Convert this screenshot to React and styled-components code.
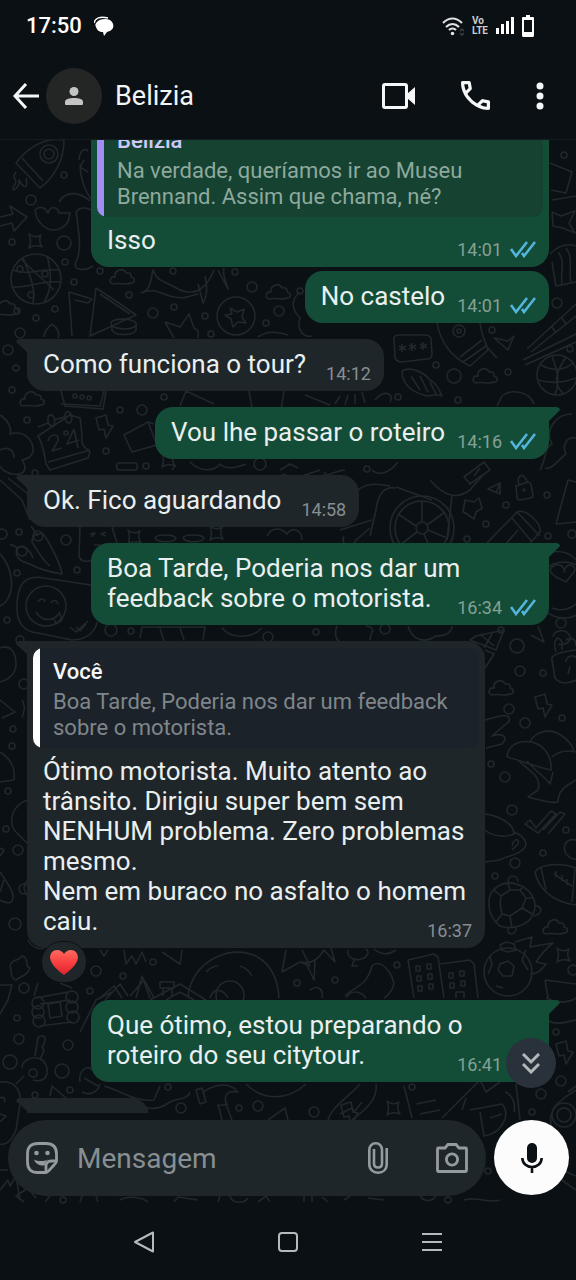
import React, { useLayoutEffect, useRef } from 'react';
import styled, { createGlobalStyle, css } from 'styled-components';

const messages = [
  {
    id: 1,
    mine: true,
    text: 'Isso',
    time: '14:01',
    quote: {
      name: 'Belizia',
      text: 'Na verdade, queríamos ir ao Museu Brennand. Assim que chama, né?',
    },
  },
  { id: 2, mine: true, text: 'No castelo', time: '14:01', grouped: true },
  { id: 3, text: 'Como funciona o tour?', time: '14:12', tail: true },
  { id: 4, mine: true, text: 'Vou lhe passar o roteiro', time: '14:16', tail: true },
  { id: 5, text: 'Ok. Fico aguardando', time: '14:58', tail: true },
  {
    id: 6,
    mine: true,
    text: 'Boa Tarde, Poderia nos dar um feedback sobre o motorista.',
    time: '16:34',
    tail: true,
  },
  {
    id: 7,
    text:
      'Ótimo motorista. Muito atento ao trânsito. Dirigiu super bem sem NENHUM problema. Zero problemas mesmo.\nNem em buraco no asfalto o homem caiu.',
    time: '16:37',
    tail: true,
    liked: true,
    quote: {
      name: 'Você',
      self: true,
      text: 'Boa Tarde, Poderia nos dar um feedback sobre o motorista.',
    },
  },
  {
    id: 8,
    mine: true,
    text: 'Que ótimo, estou preparando o roteiro do seu citytour.',
    time: '16:41',
    tail: true,
  },
  { id: 9, text: 'Já', time: '16:42', tail: true },
];

// small loose circles of the wallpaper: x, y, radius
const rings = [
  [31, 200, 5], [64, 175, 3], [64, 243, 7], [12, 242, 3], [65, 262, 3], [74, 282, 3],
  [100, 271, 3], [129, 295, 3], [153, 313, 5], [174, 307, 3], [205, 316, 3], [17, 311, 3],
  [36, 318, 3], [55, 309, 3], [20, 333, 5], [8, 350, 5], [16, 368, 3], [12, 390, 3],
  [173, 271, 3], [235, 272, 3], [252, 287, 5], [279, 311, 5], [266, 323, 3], [211, 334, 3],
  [564, 155, 3], [557, 303, 5], [492, 330, 3], [570, 349, 3], [436, 365, 3], [454, 376, 7],
  [508, 372, 3], [300, 291, 3], [27, 420, 3], [142, 410, 5], [120, 410, 3], [164, 397, 3],
  [106, 451, 3], [146, 466, 3], [35, 473, 3], [260, 464, 6], [66, 540, 5], [19, 532, 3],
  [17, 573, 3], [77, 570, 3], [7, 620, 3], [111, 630, 6], [131, 631, 3], [2, 534, 5],
  [367, 469, 3], [547, 495, 3], [506, 505, 3], [486, 524, 3], [548, 536, 3], [572, 534, 4],
  [467, 539, 3], [398, 397, 3], [458, 400, 3], [385, 629, 5], [316, 632, 3], [501, 630, 3],
  [561, 623, 5], [20, 640, 4], [268, 637, 5], [24, 684, 5], [13, 729, 3],
  [12, 746, 3], [8, 791, 3], [6, 829, 3], [18, 850, 5], [15, 924, 6], [24, 889, 5],
  [96, 971, 5], [123, 976, 3], [153, 962, 3], [517, 646, 7], [520, 671, 5], [543, 673, 3],
  [509, 709, 5], [525, 723, 5], [562, 718, 3], [491, 764, 3], [505, 777, 5], [512, 810, 5],
  [566, 830, 3], [543, 853, 3], [515, 863, 5], [495, 876, 3], [397, 965, 3], [335, 980, 3],
  [573, 970, 5], [90, 991, 3], [24, 988, 5], [17, 1018, 3], [19, 1039, 5], [68, 1045, 5],
  [10, 1062, 7], [62, 1071, 7], [35, 1095, 3], [70, 1090, 3], [181, 1108, 5], [168, 1087, 3],
  [239, 1108, 3], [258, 1106, 5], [314, 1112, 5], [541, 1094, 5], [561, 1081, 5], [532, 1112, 3],
  [556, 1032, 3], [412, 1087, 3], [488, 1171, 3], [63, 1200, 3], [448, 1200, 3], [297, 983, 3],
];

const clouds = [
  [122, 277], [278, 292], [32, 399], [485, 376], [501, 688], [555, 927], [6, 308], [150, 555],
];

const sparkles = [
  [35, 241], [134, 537], [393, 1108], [563, 955], [216, 533], [168, 460],
];

const bolts = [
  [105, 426], [544, 705], [565, 1052], [350, 1113],
];

const doodles = [
  // rocket and smoke
  'M16 163C28 147 45 137 64 140C64 158 56 176 40 188ZM22 158L43 181M16 172C10 180 20 178 14 186C10 194 20 188 19 180C26 192 28 186 26 178',
  // arrow
  'M0 217L13 214L10 206L27 217L14 231L12 223L0 226',
  // mitten with sleeve
  'M35 210C40 205 46 208 48 213C50 205 58 207 59 213L70 213L68 222C62 230 54 231 48 229C40 225 36 219 35 210M59 202C66 190 80 192 90 201M76 212C80 206 88 208 91 210M76 212C79 232 82 250 76 262C72 270 84 272 93 266',
  'M79 160C80 150 84 148 88 151M80 165C80 176 84 190 92 200M84 160L80 167L88 172',
  // globe
  'M13 270C28 276 42 268 58 270M12 287C28 288 42 280 60 282M23 258C30 275 36 290 33 303M47 256C52 272 52 290 44 302M22 260L54 290',
  // pizza slices
  'M72 336L69 292L92 299L88 303L75 300M96 288L90 336L136 315C124 306 108 296 96 288ZM100 294L130 314',
  'M111 322C116 318 132 318 136 323V330C134 336 114 336 112 330ZM111 326C120 330 130 330 136 326',
  // whale
  'M141 293C151 290 150 282 153 270C157 282 165 281 180 290C194 296 206 290 214 270M198 284L203 303C208 296 207 285 205 276M218 270L228 289C226 280 222 276 224 268M141 293C152 288 158 292 170 296C184 300 190 296 198 294',
  'M165 322L180 327L189 314L194 328C200 330 198 334 198 338M165 322L174 338M230 308L237 312L244 309L242 317L246 323L238 322L233 327L231 319L225 315L232 314Z',
  // leafy plant above the first grey bubble
  'M44 337C44 330 50 326 52 324C58 328 60 334 58 338M258 337C268 330 278 332 288 335M300 292C290 300 292 310 300 318C296 330 304 338 312 336',
  // picture frames on the right edge
  'M550 163L572 172L566 193L551 190M552 200L576 196M552 212L561 216L575 211L569 223L575 233L563 228L553 226Z',
  // shirt
  'M550 254C560 244 570 244 576 246M552 262L556 286L576 282M558 252C566 262 560 272 562 284M566 248C574 258 568 270 571 283',
  // telescope
  'M437 322C440 342 452 358 470 366L488 350C484 338 480 330 480 322M463 362L486 346L497 358M460 357L482 340M508 341L494 338L508 350L514 336Z',
  // speech box
  'M394 340Q393 336 398 335L425 335Q430 335 431 339L432 354Q432 359 427 359L402 362Q396 362 395 357Z',
  // chopsticks
  'M527 349L576 304M531 352L576 316M523 360L576 334M525 365L576 342M552 327L556 333M562 318L566 324',
  // basket ball
  'M541 365C554 372 566 370 574 362M538 380C552 384 566 382 576 378M552 356C558 372 560 382 555 395M566 357C556 372 552 384 564 394',
  // shell
  'M402 371C410 366 424 372 430 380C438 384 440 392 442 396C436 392 430 398 424 395C412 392 402 384 402 371M411 376L420 390M420 376L428 392M430 382L436 394',
  // cash
  'M61 391L65 406L103 409L106 391M61 404L100 406L104 391M180 406L186 391L214 404M249 391L252 408M284 391L281 410M305 395L330 405M335 404L340 396M345 405L348 395M355 404L355 394M365 403L362 392M497 406L502 396C512 388 530 392 534 404M375 400C385 388 395 395 390 402',
  // calendar
  'M38 427L48 423M54 420L64 417M70 415L80 418L82 434C80 446 86 448 90 452L88 458L50 470L46 464C44 454 44 446 38 436Z M48 462L90 450M49 415C54 414 56 420 54 425C50 428 46 422 49 415M66 412C72 410 73 420 70 423C65 424 64 416 66 412',
  // sticky note
  'M124 435L148 422L157 445L132 452ZM148 422L154 424',
  // flower bush
  'M0 415C8 420 12 428 10 434C24 430 34 440 33 452C30 460 24 459 22 460C28 468 24 476 14 474C8 474 2 470 0 466M0 450C8 446 14 450 14 458M0 480L22 500L30 520M8 478L28 494',
  'M190 462C200 472 214 472 220 464C226 470 236 468 246 464M280 470L290 464L298 468M282 474L296 478M540 470C546 460 544 448 552 444C544 430 556 414 572 414M576 438C566 436 562 446 566 454C558 460 552 470 545 468',
  // chilies
  'M17 548C14 556 20 562 30 564C40 570 50 572 62 574C60 562 52 548 46 538C42 530 32 534 32 542C36 548 42 560 50 566M17 548C24 544 30 550 33 558M31 526L38 536M10 544L18 548M0 554C10 564 14 582 10 594C8 600 4 604 0 606',
  // sleeping face
  'M80 527L79 556C80 562 88 562 92 560M112 527L117 543M90 534L95 533L91 537M106 532L101 534L106 536M94 545H100M155 538C156 534 174 534 176 538C174 543 158 543 155 538M183 538C184 534 202 534 204 538C202 543 186 543 183 538M267 536C272 526 282 528 287 534C292 526 302 530 302 540',
  // smiling sticker
  'M20 588C24 578 34 576 44 578L91 585M17 606C16 622 24 632 38 633L72 640C88 640 96 630 97 622M20 588Q17 596 17 606M38 602C40 598 44 598 45 602M51 603C53 599 57 600 58 604M36 612C42 622 54 622 60 612M54 619L56 624L62 620L60 614M70 627L76 632L88 621M76 627L80 631L86 624',
  // scooter
  'M372 470C380 478 392 470 398 462M370 536L376 510C378 492 386 486 396 488M396 487L432 500M358 490C368 482 380 484 390 486M340 530L372 520M355 541L370 528M430 480C444 496 456 500 470 490L482 476M344 536C340 545 350 548 356 541M452 495L447 540M290 480L320 470M326 472C320 480 330 472 345 470',
  // watch
  'M464 477L484 462L490 470L470 484ZM474 476L480 468M488 489L500 483V494ZM500 483L496 493',
  // padlock
  'M516 486L528 482Q530 482 531 485L533 495Q533 498 530 498L520 500Q517 500 517 497ZM519 485C516 474 524 472 527 482',
  'M465 500L474 502L479 498L482 508L476 512L474 519L467 514L463 512Z',
  'M487 543L517 512C526 508 542 524 540 532L530 543M517 512L540 536M512 518L532 542M505 545L518 530M556 524L568 480L576 482M556 524L576 522',
  'M550 570C555 560 566 566 564 572C566 560 578 566 574 572L566 582C558 578 552 576 550 570M551 552C562 550 572 554 576 560M552 608C562 612 572 608 576 604',
  'M140 638L142 627H205L203 640M160 628L164 642M180 628L184 640M222 628C230 638 250 640 262 628M337 626C334 634 336 640 340 642M370 640C370 632 378 628 366 626M408 626C412 640 424 644 436 636C446 636 452 632 452 626M476 636L504 630L496 650L470 640ZM480 634L494 646M492 634L484 648M531 635L544 642L538 626M553 637C553 630 566 628 570 636C572 642 564 646 558 644',
  // big padlock
  'M552 660C550 655 560 652 576 650M552 660L555 678C560 684 568 684 576 680M556 652C552 640 558 634 562 642V650M566 640C572 636 576 640 576 646M566 662C566 656 574 654 576 658M568 674L570 666',
  // mushrooms
  'M507 757C508 744 520 740 532 742C546 746 552 758 551 770C538 768 520 760 507 757M530 742C536 730 552 728 562 736C572 742 574 752 574 751M552 757C560 750 568 750 576 752M518 760C530 772 542 776 538 790C532 794 530 796 528 797C540 800 552 804 558 802C558 790 566 786 576 780M527 761C534 770 544 776 550 784L553 772',
  // hand
  'M485 720L500 716C510 714 512 720 506 724L492 736C504 732 508 738 502 744L486 748M485 668L494 654L485 650',
  'M525 824L530 820L536 828L551 811L556 814L538 833ZM543 830L560 812L565 814L548 834M576 840C566 838 562 846 566 854C572 860 576 860 576 858',
  // cup
  'M485 814C500 816 514 824 514 834C504 838 492 836 485 830M514 832C528 838 528 846 522 850C516 856 506 856 500 860L485 862M512 846C514 838 520 838 518 844L512 850',
  // american football
  'M535 872C540 864 560 862 576 868M535 872C538 888 552 902 576 905M541 868L546 890M554 874L572 886M556 871V877M562 875V881M567 879V885M575 868L572 902',
  // turtle
  'M489 900C490 888 504 880 516 884C530 888 538 900 534 912C530 926 512 930 500 926C492 920 488 912 489 900M501 896L510 890L520 890L526 898L522 908L510 916L502 914L500 904ZM501 896L494 890M510 890L508 883M520 890L524 886M526 898L534 898M522 908L532 914M510 916L512 928M502 914L496 922M508 882C508 874 518 874 518 882M534 906C542 904 544 914 534 916M508 928C506 936 516 936 516 928',
  // flaming football
  'M500 945L506 942L514 944L516 950L508 952L502 950ZM500 964L508 961L514 966L512 976L503 976L498 970ZM490 956L492 965L488 974M526 950L522 960L528 970M496 986L503 988M515 942L532 937L530 947L553 943C544 950 540 956 536 962L546 964C540 972 536 974 530 974',
  // buildings
  'M408 960L434 954L438 957L444 998M408 960L414 998M440 964L470 960L474 964L478 998M416 966H420V971H416ZM427 964H431V969H427ZM417 976H421V981H417ZM428 974H432V979H428ZM418 986H422V991H418ZM429 984H433V989H429ZM449 973H453V978H449ZM460 971H464V976H460ZM450 983H454V988H450ZM461 981H465V986H461ZM456 998V992H464V998',
  'M545 980L576 984M545 980L548 998M547 1020C556 1026 566 1022 576 1020M546 998C560 1004 570 1002 576 998',
  // sun
  'M302 962C310 964 318 960 324 950L335 962L331 948M306 963L314 980L315 960M345 996C354 986 366 988 372 966C380 958 392 972 394 984C392 990 388 996 384 998M348 950C346 958 356 962 364 958C370 954 368 950 366 949M354 960L352 966L358 966M374 949C382 956 390 954 396 950',
  // left column
  'M0 648C10 644 16 652 16 664C16 674 8 680 0 682M0 700L15 712L2 718M22 700C26 706 24 712 22 718M0 752C10 758 16 768 14 780L0 782M28 800C14 804 8 818 14 830L28 844M0 856L4 850L0 848M0 872C8 884 14 892 13 898C12 904 8 904 0 900M4 880L0 892M28 880C22 886 24 892 28 896M10 966C12 958 18 962 22 956C30 958 24 966 30 968C28 976 20 976 16 980C10 978 12 972 10 966M28 940C32 948 40 950 44 948M100 950L104 956L108 950M124 950L126 964L132 956L136 964L142 952L146 962M162 952L180 964L182 950M0 985H12L8 1000L0 1014',
  // rainbow
  'M188 998C190 960 236 940 262 960C272 968 278 980 279 998M206 972C210 968 214 966 218 966M240 966C246 968 250 972 252 976M286 950L282 972L300 962L310 966L302 950',
  'M160 982H174V988H160ZM163 988V996M172 988V996M60 983L72 988M136 998L142 976L150 998M100 998L114 986L122 998',
  // log cabin
  'M36 998L68 992M40 1004L70 1000M40 1026L72 1022M48 1004L50 1018L62 1016L60 1002ZM34 996L38 983M80 1032L96 1000L112 992M105 1000L120 984L128 996M130 996L144 980L154 998M150 1000L180 984L206 1000M166 1000L180 992L194 1000M210 998C214 986 224 990 228 998',
  // key
  'M35 1056L38 1038C40 1034 46 1036 45 1040L44 1044L42 1047L44 1050L40 1060M22 1068C22 1056 46 1052 47 1070C48 1080 40 1082 33 1080M24 1076L16 1084',
  // mask
  'M0 1082C14 1080 22 1090 20 1104L16 1130C12 1140 6 1146 0 1144M0 1098C4 1096 6 1100 4 1102M0 1122L6 1116L0 1114',
  // tools
  'M80 1082C78 1070 88 1064 92 1070M84 1078L98 1086M82 1092C90 1096 98 1092 100 1084M50 1096L52 1086L66 1098M104 1086C120 1090 134 1102 154 1100L160 1086M132 1098C142 1110 156 1112 170 1102C178 1098 188 1100 190 1092',
  'M196 1090L202 1088L206 1102L200 1104ZM203 1092C212 1086 228 1080 238 1092C226 1090 224 1096 226 1104L232 1120M218 1104L222 1120M217 1106L228 1104M268 1120L285 1108L288 1120M246 1084C262 1100 286 1102 306 1084',
  'M328 1120C332 1106 350 1096 360 1084M352 1120C368 1108 378 1098 376 1084M340 1114L352 1108L354 1112L362 1102M404 1086L412 1118M416 1104L436 1100M420 1114L440 1110M442 1118L480 1080L486 1092L500 1082M466 1098L462 1110M470 1110L502 1104C512 1116 500 1134 484 1136L480 1112M490 1118L502 1114M505 1092C512 1094 516 1104 514 1112M516 1084L520 1120M552 1130C546 1108 560 1100 576 1090M576 1086L568 1092',
  // under the text box
  'M0 1170H8M0 1190L8 1180L10 1186L16 1176L20 1200M24 1202L16 1196L28 1188L36 1198M45 1202L50 1196M80 1202L82 1196M98 1202L96 1196M120 1200C126 1196 140 1196 148 1202M174 1202L178 1197L198 1200M218 1202L220 1196M230 1196C232 1204 244 1204 248 1198M258 1202L266 1196L270 1202M304 1202V1196M312 1202V1196M322 1197L328 1202M344 1200L350 1196M368 1198L384 1200M420 1196C424 1202 432 1202 436 1196M464 1200C476 1196 490 1204 500 1200M556 1176L576 1190M562 1170L576 1176',
  'M290 1020L300 1028M310 990C318 984 324 990 322 998M346 998C350 990 360 990 366 998M480 160L470 150M176 465L172 470M60 1150L64 1160',
];

const circles = [
  [49, 154, 9], [49, 154, 5], [36, 279, 25], [236, 316, 19], [459, 331, 6], [459, 331, 2],
  [557, 375, 20], [46, 606, 20], [422, 528, 32], [422, 528, 27], [422, 528, 6],
  [66, 433, 2], [508, 972, 24], [230, 995, 14], [33, 1073, 4], [38, 1003, 6], [38, 1012, 6],
  [39, 1021, 6], [72, 997, 6], [72, 1007, 6], [73, 1017, 6], [564, 1115, 12], [564, 1115, 7],
  [75, 396, 2], [82, 397, 2], [89, 398, 2], [20, 269, 3], [45, 274, 3], [31, 295, 3],
  [22, 551, 5], [38, 536, 5], [564, 590, 28], [524, 490, 1],
];

const spokes = 'M422 522V501M427 525L445 512M428 530L447 538M417 532L400 545M416 526L398 514M424 534L432 553';

function Wallpaper() {
  return (
    <WallpaperSvg viewBox="0 140 576 1064" preserveAspectRatio="xMidYMin slice" aria-hidden="true">
      {rings.map(([x, y, r], i) => <circle key={i} cx={x} cy={y} r={r} />)}
      {circles.map(([x, y, r], i) => <circle key={i} cx={x} cy={y} r={r} />)}
      {doodles.map((d, i) => <path key={i} d={d} />)}
      <path d={spokes} />
      {clouds.map(([x, y], i) => (
        <path
          key={i}
          transform={`translate(${x} ${y})`}
          d="M-9 7C-14 6 -12 -1 -7 0C-8 -7 1 -10 4 -4C8 -5 10 -2 9 0C14 1 13 7 8 6C4 9 -2 5 -9 7Z"
        />
      ))}
      {sparkles.map(([x, y], i) => (
        <path
          key={i}
          transform={`translate(${x} ${y})`}
          d="M-6 -7Q0 -2 6 -6Q3 0 7 6Q0 3 -6 7Q-3 0 -6 -7Z"
        />
      ))}
      {bolts.map(([x, y], i) => (
        <path
          key={i}
          transform={`translate(${x} ${y})`}
          d="M-9 -8L1 -11L3 -1L8 0L1 12L-1 3L-6 4Z"
        />
      ))}
      <path d="M402 344V352M399 346L406 350M406 346L399 350M412 343V351M409 345L416 349M416 345L409 349M423 342V350M420 344L427 348M427 344L420 348" />
      <path d="M118 463H136Q139 466 136 470H118Q115 466 118 463Z" />
      <path d="M48 441C50 433 60 433 58 441L52 451L62 448M74 429L67 444L79 440M74 429L78 448" />
    </WallpaperSvg>
  );
}

function Ticks() {
  return (
    <svg width="26" height="18" viewBox="0 0 26 18" fill="none" stroke="#53b4dc" strokeWidth="2.6">
      <path d="M1 9L6 16L17 2" />
      <path d="M12 13L14 16L25 2" />
    </svg>
  );
}

function Message({ msg }) {
  return (
    <Bubble $mine={msg.mine} $tail={msg.tail} $grouped={msg.grouped} $liked={msg.liked}>
      {msg.quote && (
        <Quote $mine={msg.mine} $self={msg.quote.self}>
          <QuoteName $self={msg.quote.self}>{msg.quote.name}</QuoteName>
          <QuoteText $mine={msg.mine}>{msg.quote.text}</QuoteText>
        </Quote>
      )}
      <Body $quoted={!!msg.quote}>
        {msg.text}
        <Meta $mine={msg.mine}>
          {msg.time}
          {msg.mine && <Ticks />}
        </Meta>
      </Body>
      {msg.liked && (
        <Reaction aria-label="Reações">
          <svg width="28" height="25" viewBox="0 0 28 25">
            <defs>
              <linearGradient id="heart" x1="0" y1="0" x2="0" y2="1">
                <stop offset="0" stopColor="#ff6a60" />
                <stop offset="0.5" stopColor="#f9403f" />
                <stop offset="1" stopColor="#dc2430" />
              </linearGradient>
            </defs>
            <path
              fill="url(#heart)"
              d="M14 25C9 21 1 15 0 8C0 3 3 0 7 0C10 0 13 2 14 4C15 2 18 0 21 0C25 0 28 3 28 8C27 15 19 21 14 25Z"
            />
          </svg>
        </Reaction>
      )}
    </Bubble>
  );
}

function App() {
  const list = useRef(null);

  // the conversation opens a little way down
  useLayoutEffect(() => {
    list.current.scrollTop = 46;
  }, []);

  return (
    <Screen>
      <GlobalStyle />
      <StatusBar>
        <Clock>17:50</Clock>
        <svg width="20" height="20" viewBox="0 0 20 20">
          <path fill="#fff" d="M3 6C5 3 12 2 16 4C19 6 20 9 19 12C18 14 16 15 13 16L10 20L9 16C5 16 3 14 2 11C1 9 1 8 3 6Z" />
          <path fill="none" stroke="#fff" strokeWidth="1.4" d="M0 7C1 2 6 0 14 2" />
        </svg>
        <StatusIcons>
          <svg width="22" height="20" viewBox="0 0 22 20" fill="none" stroke="#dfe1e2" strokeWidth="2.2">
            <path d="M1 7C7 1 14 1 20 7" />
            <path d="M4 11C8 7 13 7 17 11" />
            <path d="M7 14C9 12 12 12 14 14" />
            <circle cx="10.500" cy="17.500" r="1.800" fill="#dfe1e2" stroke="none" />
            <path stroke="#3c4144" strokeWidth="1.500" d="M18 15L20 13L22 15M18 17L20 19L22 17" />
          </svg>
          <Volte>
            <span>Vo</span>
            <span>LTE</span>
          </Volte>
          <svg width="18" height="18" viewBox="0 0 18 18" fill="#fff">
            <rect x="0" y="11" width="3" height="6" />
            <rect x="5" y="7" width="3" height="10" />
            <rect x="10" y="4" width="3" height="13" />
            <rect x="15" y="0" width="3" height="17" />
          </svg>
          <svg width="12" height="22" viewBox="0 0 12 22">
            <path fill="#fff" fillRule="evenodd" d="M4 0H8V2H11Q12 2 12 3V20Q12 22 11 22H1Q0 22 0 20V3Q0 2 1 2H4ZM2 5V17H10V5Z" />
          </svg>
        </StatusIcons>
      </StatusBar>

      <Header>
        <IconButton aria-label="Voltar">
          <svg width="26" height="26" viewBox="0 0 26 26" fill="none" stroke="#f4f6f7" strokeWidth="3">
            <path d="M26 13H2M13 1L2 13L13 25" />
          </svg>
        </IconButton>
        <Avatar>
          <svg width="18" height="18" viewBox="0 0 18 18" fill="#c4c4c4">
            <circle cx="9" cy="4.500" r="4.500" />
            <path d="M1 18Q0 18 0 17V15C0 12 4 11 9 11S18 12 18 15V17Q18 18 17 18Z" />
          </svg>
        </Avatar>
        <Contact>Belizia</Contact>
        <Actions>
          <IconButton aria-label="Chamada de vídeo">
            <svg width="33" height="26" viewBox="0 0 33 26">
              <rect x="1.500" y="1.500" width="23" height="23" rx="1.500" fill="none" stroke="#f4f6f7" strokeWidth="3" />
              <path fill="#f4f6f7" d="M25 11L33 4V22L25 15Z" />
            </svg>
          </IconButton>
          <IconButton aria-label="Chamada de voz">
            <svg width="29" height="29" viewBox="3 3 18 18" fill="#f4f6f7">
              <path d="M19.950 21C17.870 21 15.810 20.550 13.780 19.640C11.740 18.730 9.890 17.450 8.230 15.780C6.560 14.110 5.270 12.260 4.360 10.230C3.450 8.190 3 6.130 3 4.050C3 3.750 3.100 3.500 3.300 3.300C3.500 3.100 3.750 3 4.050 3H8.100C8.330 3 8.540 3.080 8.730 3.240C8.910 3.400 9.020 3.580 9.050 3.800L9.700 7.300C9.730 7.570 9.720 7.790 9.680 7.980C9.630 8.160 9.530 8.320 9.400 8.450L6.980 10.900C7.310 11.520 7.700 12.110 8.160 12.690C8.610 13.260 9.120 13.820 9.650 14.350C10.170 14.870 10.710 15.350 11.270 15.790C11.840 16.230 12.440 16.630 13.100 17L15.450 14.650C15.600 14.500 15.800 14.390 16.040 14.310C16.280 14.240 16.520 14.220 16.750 14.250L20.200 14.950C20.430 15.020 20.630 15.140 20.780 15.310C20.930 15.490 21 15.680 21 15.900V19.950C21 20.250 20.900 20.500 20.700 20.700C20.500 20.900 20.250 21 19.950 21ZM6.030 9L7.680 7.350L7.250 5H5.030C5.110 5.680 5.230 6.360 5.380 7.030C5.530 7.690 5.740 8.350 6.030 9ZM14.980 17.950C15.630 18.230 16.290 18.460 16.960 18.630C17.640 18.790 18.320 18.900 19 18.950V16.750L16.650 16.280Z" />
            </svg>
          </IconButton>
          <IconButton aria-label="Mais opções">
            <svg width="8" height="28" viewBox="0 0 8 28" fill="#f4f6f7">
              <circle cx="4" cy="4" r="3.500" />
              <circle cx="4" cy="14" r="3.500" />
              <circle cx="4" cy="24" r="3.500" />
            </svg>
          </IconButton>
        </Actions>
      </Header>

      <Chat>
        <Wallpaper />
        <List ref={list}>
          {messages.map((msg) => <Message key={msg.id} msg={msg} />)}
        </List>
        <ScrollDown aria-label="Ir para o fim">
          <svg width="18" height="21" viewBox="0 0 18 21" fill="none" stroke="#b3b8bb" strokeWidth="3">
            <path d="M1 1L9 9L17 1M1 11L9 19L17 11" />
          </svg>
        </ScrollDown>
        <Composer onSubmit={(e) => e.preventDefault()}>
          <Field>
            <IconButton type="button" aria-label="Figurinhas">
              <svg width="32" height="32" viewBox="0 0 32 32" fill="none" stroke="#949b9e" strokeWidth="2.800">
                <path d="M20 30.500H12C5 30.500 1.500 27 1.500 20V12C1.500 5 5 1.500 12 1.500H20C27 1.500 30.500 5 30.500 12V19C30.500 21 29 22 28 23L23 28.500C22 29.500 21 30.500 20 30.500Z" />
                <path d="M20 30V24C20 21 22 19 25 19H30" />
                <circle cx="10.500" cy="11" r="2.300" fill="#949b9e" stroke="none" />
                <circle cx="21.500" cy="11" r="2.300" fill="#949b9e" stroke="none" />
                <path fill="#949b9e" stroke="none" d="M8 17.500C12 19.500 18 19.500 22 17.500C20 19.500 19 21 18.500 23.500C14 24 9.500 22 8 17.500Z" />
              </svg>
            </IconButton>
            <Input type="text" placeholder="Mensagem" aria-label="Mensagem" />
            <IconButton type="button" aria-label="Anexar">
              <svg width="20" height="32" viewBox="0 0 20 32" fill="none" stroke="#949b9e" strokeWidth="2.600">
                <path d="M18.700 6V22C18.700 27.500 15 30.700 10 30.700S1.300 27.500 1.300 22V8C1.300 4 4 1.300 7.700 1.300S14 4 14 8V21.500C14 24 12.300 25.500 10 25.500S6 24 6 21.500V7" />
              </svg>
            </IconButton>
            <IconButton type="button" aria-label="Câmera">
              <svg width="32" height="30" viewBox="0 0 32 30" fill="none" stroke="#949b9e" strokeWidth="2.800">
                <path d="M2.500 5H9L12 1.500H20L23 5H29.500Q30.500 5 30.500 6V27.500Q30.500 28.500 29.500 28.500H2.500Q1.500 28.500 1.500 27.500V6Q1.500 5 2.500 5Z" />
                <circle cx="16" cy="16.500" r="5.600" />
              </svg>
            </IconButton>
          </Field>
          <MicButton type="button" aria-label="Gravar áudio">
            <svg width="22" height="30" viewBox="0 0 22 30">
              <rect x="6" y="0" width="10" height="20" rx="5" fill="#0b1014" />
              <path fill="none" stroke="#0b1014" strokeWidth="2.600" d="M1.300 15C1.500 20.500 5.500 24 11 24S20.500 20.500 20.700 15M11 24V30" />
            </svg>
          </MicButton>
        </Composer>
      </Chat>

      <NavBar>
        <IconButton aria-label="Android voltar">
          <svg width="20" height="22" viewBox="0 0 20 22" fill="none" stroke="#b5babd" strokeWidth="2" strokeLinejoin="round">
            <path d="M19 1.500V20.500L1 11Z" />
          </svg>
        </IconButton>
        <IconButton aria-label="Início">
          <svg width="20" height="20" viewBox="0 0 20 20" fill="none" stroke="#b5babd" strokeWidth="2">
            <rect x="1" y="1" width="18" height="18" rx="3" />
          </svg>
        </IconButton>
        <IconButton aria-label="Recentes">
          <svg width="20" height="20" viewBox="0 0 20 20" stroke="#b5babd" strokeWidth="2">
            <path d="M0 2H20M0 10H20M0 18H20" />
          </svg>
        </IconButton>
      </NavBar>
    </Screen>
  );
}

export default App;

const GlobalStyle = createGlobalStyle`
  * {
    box-sizing: border-box;
  }
  body {
    margin: 0;
    background: #0b1014;
    font-family: Roboto, "Noto Sans", sans-serif;
  }
  button,
  input {
    font-family: inherit;
  }
  svg {
    display: block;
    flex: none;
  }
`;

const Screen = styled.div`
  display: flex;
  flex-direction: column;
  height: 100vh;
  background: #0b1014;
  color: #e9eff0;
`;

const StatusBar = styled.div`
  display: flex;
  align-items: center;
  gap: 12px;
  height: 52px;
  padding: 0 42px 0 26px;
`;

const Clock = styled.span`
  font-size: 22px;
  line-height: 28px;
  font-weight: 500;
  color: #fff;
`;

const StatusIcons = styled.div`
  display: flex;
  align-items: center;
  gap: 8px;
  margin-left: auto;
`;

const Volte = styled.div`
  display: flex;
  flex-direction: column;
  font-size: 10px;
  line-height: 10px;
  font-weight: 700;
  color: #c9cccd;
`;

const Header = styled.header`
  display: flex;
  align-items: center;
  height: 88px;
  padding: 0 32px 0 13px;
  border-bottom: 1px solid #161d20;
`;

const IconButton = styled.button`
  display: flex;
  align-items: center;
  justify-content: center;
  padding: 0;
  border: none;
  background: none;
  cursor: pointer;
`;

const Avatar = styled.div`
  display: flex;
  align-items: center;
  justify-content: center;
  width: 56px;
  height: 56px;
  margin: 0 13px 0 7px;
  border-radius: 50%;
  background: #242626;
`;

const Contact = styled.h1`
  margin: 0;
  font-size: 27px;
  line-height: 32px;
  font-weight: 400;
  color: #f2f5f6;
`;

const Actions = styled.div`
  display: flex;
  align-items: center;
  gap: 46px;
  margin-left: auto;
`;

const Chat = styled.main`
  position: relative;
  display: flex;
  flex: 1;
  flex-direction: column;
  min-height: 0;
`;

const WallpaperSvg = styled.svg`
  position: absolute;
  inset: 0;
  width: 100%;
  height: 100%;
  fill: none;
  stroke: #20282b;
  stroke-width: 1.6;
  stroke-linejoin: round;
`;

const List = styled.div`
  position: relative;
  display: flex;
  flex: 1;
  flex-direction: column;
  min-height: 0;
  padding: 0 27px 16px;
  overflow-y: auto;
  scrollbar-width: none;
`;

const Bubble = styled.div`
  position: relative;
  flex: none;
  align-self: ${(p) => (p.$mine ? 'flex-end' : 'flex-start')};
  max-width: calc(100% - 64px);
  margin-top: ${(p) => (p.$grouped ? '4px' : '16px')};
  margin-bottom: ${(p) => (p.$liked ? '36px' : '0')};
  padding: 0 6px;
  border-radius: 18px;
  background: ${(p) => (p.$mine ? '#144d37' : '#1f2629')};

  ${(p) => p.$tail && css`
    border-top-${p.$mine ? 'right' : 'left'}-radius: 0;

    &::before {
      content: '';
      position: absolute;
      top: 0;
      ${p.$mine ? 'right' : 'left'}: -11px;
      width: 12px;
      height: 14px;
      background: inherit;
      border-radius: ${p.$mine ? '0 4px 0 0' : '4px 0 0 0'};
      clip-path: ${p.$mine ? 'polygon(0 0, 100% 0, 100% 3px, 1px 100%, 0 100%)' : 'polygon(0 0, 100% 0, 100% 100%, 0 3px)'};
    }
  `}
`;

const Quote = styled.blockquote`
  position: relative;
  top: 7px;
  margin: 0;
  padding: 11px 12px 7px 20px;
  overflow: hidden;
  border-radius: 10px;
  background: ${(p) => (p.$mine ? '#154231' : '#1c2229')};

  &::before {
    content: '';
    position: absolute;
    top: 0;
    bottom: 0;
    left: 0;
    width: 7px;
    background: ${(p) => (p.$self ? '#fff' : '#a18df5')};
  }
`;

const QuoteName = styled.div`
  margin-bottom: 4px;
  font-size: 22px;
  line-height: 26px;
  font-weight: 500;
  color: ${(p) => (p.$self ? '#f4f6f7' : '#cfc8fb')};
`;

const QuoteText = styled.div`
  font-size: 22px;
  line-height: 26px;
  color: ${(p) => (p.$mine ? '#8ea99d' : '#7f868b')};
`;

const Body = styled.div`
  display: flow-root;
  padding: ${(p) => (p.$quoted ? '15px' : '10px')} 7px 7px 10px;
  font-size: 26px;
  line-height: 30px;
  white-space: pre-line;
`;

const Meta = styled.span`
  display: flex;
  float: right;
  gap: 8px;
  height: 20px;
  margin: 15px 0 0 ${(p) => (p.$mine ? '12px' : '20px')};
  font-size: 18px;
  line-height: 20px;
  color: ${(p) => (p.$mine ? '#84a094' : '#878e92')};
`;

const Reaction = styled.button`
  position: absolute;
  bottom: -35px;
  left: 14px;
  display: flex;
  align-items: center;
  justify-content: center;
  width: 46px;
  height: 42px;
  padding: 0;
  border: 1px solid #0b1014;
  border-radius: 21px;
  background: #1f2629;
`;

const ScrollDown = styled.button`
  position: absolute;
  right: 20px;
  bottom: 116px;
  display: flex;
  align-items: center;
  justify-content: center;
  width: 50px;
  height: 50px;
  padding: 0;
  border: none;
  border-radius: 50%;
  background: #29323a;
`;

const Composer = styled.form`
  position: relative;
  display: flex;
  gap: 8px;
  padding: 7px 7px 8px 8px;
`;

const Field = styled.div`
  display: flex;
  flex: 1;
  align-items: center;
  min-width: 0;
  height: 76px;
  padding: 0 18px;
  border-radius: 38px;
  background: #1f2629;

  ${IconButton}:nth-of-type(2) {
    margin-right: 48px;
  }
`;

const Input = styled.input`
  flex: 1;
  min-width: 0;
  padding: 0 19px;
  border: none;
  outline: none;
  background: none;
  font-size: 28px;
  color: #e9eff0;

  &::placeholder {
    color: #878f92;
    opacity: 1;
  }
`;

const MicButton = styled.button`
  display: flex;
  align-items: center;
  justify-content: center;
  width: 75px;
  height: 75px;
  padding: 0;
  border: none;
  border-radius: 50%;
  background: #fcfcfc;
`;

const NavBar = styled.nav`
  display: grid;
  grid-template-columns: 1fr 1fr 1fr;
  height: 76px;
  padding: 0 72px;
`;
